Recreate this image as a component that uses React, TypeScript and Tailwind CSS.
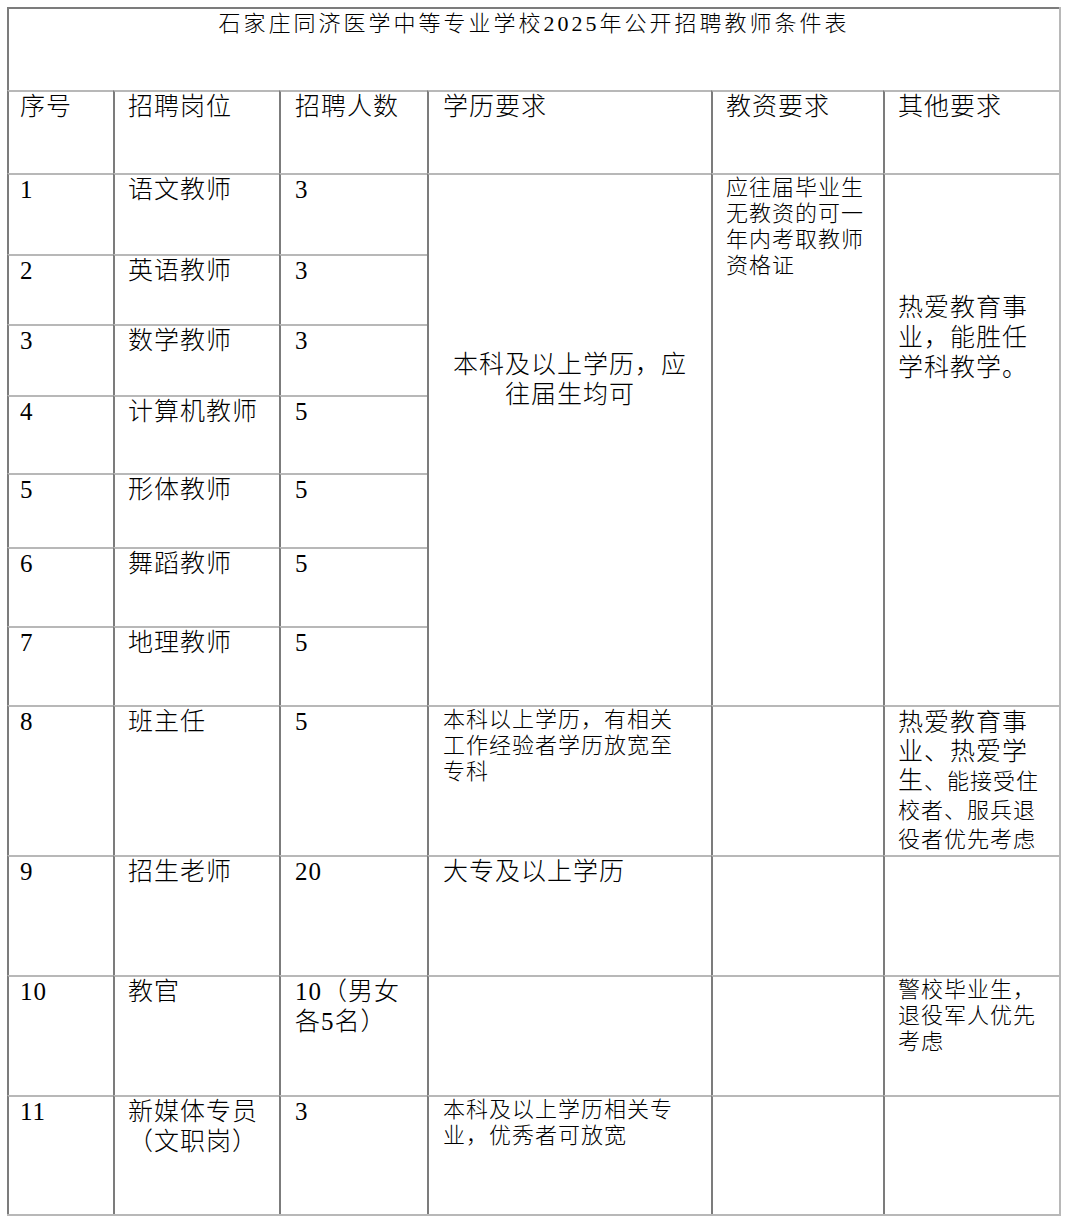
import type { ReactNode } from "react";

// 招聘条件表 — a plain bordered table laid out on a grid

const ROWS = [
  { no: "1", post: "语文教师", count: "3" },
  { no: "2", post: "英语教师", count: "3" },
  { no: "3", post: "数学教师", count: "3" },
  { no: "4", post: "计算机教师", count: "5" },
  { no: "5", post: "形体教师", count: "5" },
  { no: "6", post: "舞蹈教师", count: "5" },
  { no: "7", post: "地理教师", count: "5" },
];

function Cell({ className = "", children }: { className?: string; children?: ReactNode }) {
  return (
    <div className={`border-t-2 border-l-2 border-t-[#b8b8b8] border-l-[#7c7c7c] ${className}`}>
      {children}
    </div>
  );
}

const big = "text-[25px] tracking-[1px] leading-[30px]";
const small = "text-[22px] tracking-[1px] leading-[26px]";

// column paddings
const c1 = "pl-[11px]";
const c2 = "pl-[13px] pr-[4px]";
const c3 = "pl-[14px] pr-[12px]";
const c4 = "pl-[14px] pr-[24px]";
const c5 = "pl-[13px] pr-[4px]";
const c6 = "pl-[13px] pr-[12px]";

export default function App() {
  return (
    <div className="min-h-screen bg-white text-black font-['Liberation_Serif','Noto_Sans_CJK_SC',serif] font-light">
      <div className="pt-[7px] pl-[7px]">
        <div className="grid w-fit grid-cols-[106px_166px_148px_284px_172px_176px] grid-rows-[83px_83px_81px_70px_71px_78px_74px_79px_79px_150px_120px_120px_119px] border-r-2 border-b-2 border-[#b8b8b8]">
          {/* title */}
          <Cell className="col-span-6 !border-t-[#7c7c7c] pt-[2px] text-center text-[22px] tracking-[3px] leading-[26px]">
            石家庄同济医学中等专业学校2025年公开招聘教师条件表
          </Cell>

          {/* header */}
          <Cell className={`${c1} ${big}`}>序号</Cell>
          <Cell className={`${c2} ${big}`}>招聘岗位</Cell>
          <Cell className={`${c3} ${big}`}>招聘人数</Cell>
          <Cell className={`${c4} ${big}`}>学历要求</Cell>
          <Cell className={`${c5} ${big}`}>教资要求</Cell>
          <Cell className={`${c6} ${big}`}>其他要求</Cell>

          {/* rows 1-7 share the last three columns */}
          {ROWS.map((r, i) => (
            <RowStart key={r.no} {...r}>
              {i === 0 && (
                <>
                  <Cell className={`row-span-7 px-[21px] pt-[175px] text-center ${big}`}>
                    本科及以上学历，应往届生均可
                  </Cell>
                  <Cell className={`row-span-7 ${c5} ${small}`}>
                    应往届毕业生无教资的可一年内考取教师资格证
                  </Cell>
                  <Cell className={`row-span-7 ${c6} pt-[118px] ${big}`}>
                    热爱教育事业，能胜任学科教学。
                  </Cell>
                </>
              )}
            </RowStart>
          ))}

          {/* 8 */}
          <RowStart no="8" post="班主任" count="5" />
          <Cell className={`${c4} ${small}`}>本科以上学历，有相关工作经验者学历放宽至专科</Cell>
          <Cell />
          <Cell className={`${c6} pt-[1px] text-[25px] tracking-[1px] leading-[29px]`}>
            热爱教育事业、热爱学生
            <span className="text-[22px] leading-none">、能接受住校者、服兵退役者优先考虑</span>
          </Cell>

          {/* 9 */}
          <RowStart no="9" post="招生老师" count="20" />
          <Cell className={`${c4} ${big}`}>大专及以上学历</Cell>
          <Cell />
          <Cell />

          {/* 10 */}
          <RowStart no="10" post="教官" count="10（男女各5名）" />
          <Cell />
          <Cell />
          <Cell className={`${c6} ${small}`}>警校毕业生，退役军人优先考虑</Cell>

          {/* 11 */}
          <RowStart no="11" post="新媒体专员（文职岗）" count="3" />
          <Cell className={`${c4} ${small}`}>本科及以上学历相关专业，优秀者可放宽</Cell>
          <Cell />
          <Cell />
        </div>
      </div>
    </div>
  );
}

function RowStart({
  no,
  post,
  count,
  children,
}: {
  no: string;
  post: string;
  count: string;
  children?: ReactNode;
}) {
  return (
    <>
      <Cell className={`${c1} ${big}`}>{no}</Cell>
      <Cell className={`${c2} ${big}`}>{post}</Cell>
      <Cell className={`${c3} ${big}`}>{count}</Cell>
      {children}
    </>
  );
}
